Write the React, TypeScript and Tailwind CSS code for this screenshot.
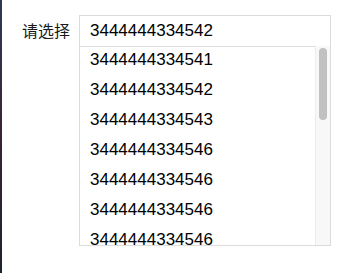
import React from "react";

const items = [
  "3444444334541",
  "3444444334542",
  "3444444334543",
  "3444444334546",
  "3444444334546",
  "3444444334546",
  "3444444334546",
];

export default function App() {
  return (
    <div className="flex h-[273px] w-[360px] bg-white overflow-hidden">
      <div className="w-[2px] h-full bg-gradient-to-b from-[#2c3a55] via-[#3a2236] to-[#1c2230]" />
      <div className="flex items-start pt-[15px]">
        <div
          className="ml-[20px] w-[57px] h-[31px] leading-[31px] text-[16px] text-[#1a1a1a]"
          style={{ fontFamily: '"Noto Sans CJK SC", "Liberation Sans", sans-serif' }}
        >
          请选择
        </div>
        <div
          className="w-[252px] h-[231px] border border-[#dcdcdc] flex flex-col text-[17px] text-black"
          style={{ fontFamily: '"Liberation Sans", Arial, sans-serif' }}
        >
          <div className="h-[30px] leading-[30px] pl-[10px] shrink-0">3444444334542</div>
          <div className="flex flex-1 min-h-0">
            <div className="flex-1 border-t border-[#dcdcdc] overflow-hidden">
              {items.map((t, i) => (
                <div key={i} className="h-[30px] leading-[26px] pl-[10px]">
                  {t}
                </div>
              ))}
            </div>
            <div className="w-[15px] border-l border-[#ececec] bg-[#f8f8f8] pt-[2px] pl-[3px]">
              <div className="w-[8px] h-[72px] rounded-full bg-[#c1c1c1]" />
            </div>
          </div>
        </div>
      </div>
    </div>
  );
}
